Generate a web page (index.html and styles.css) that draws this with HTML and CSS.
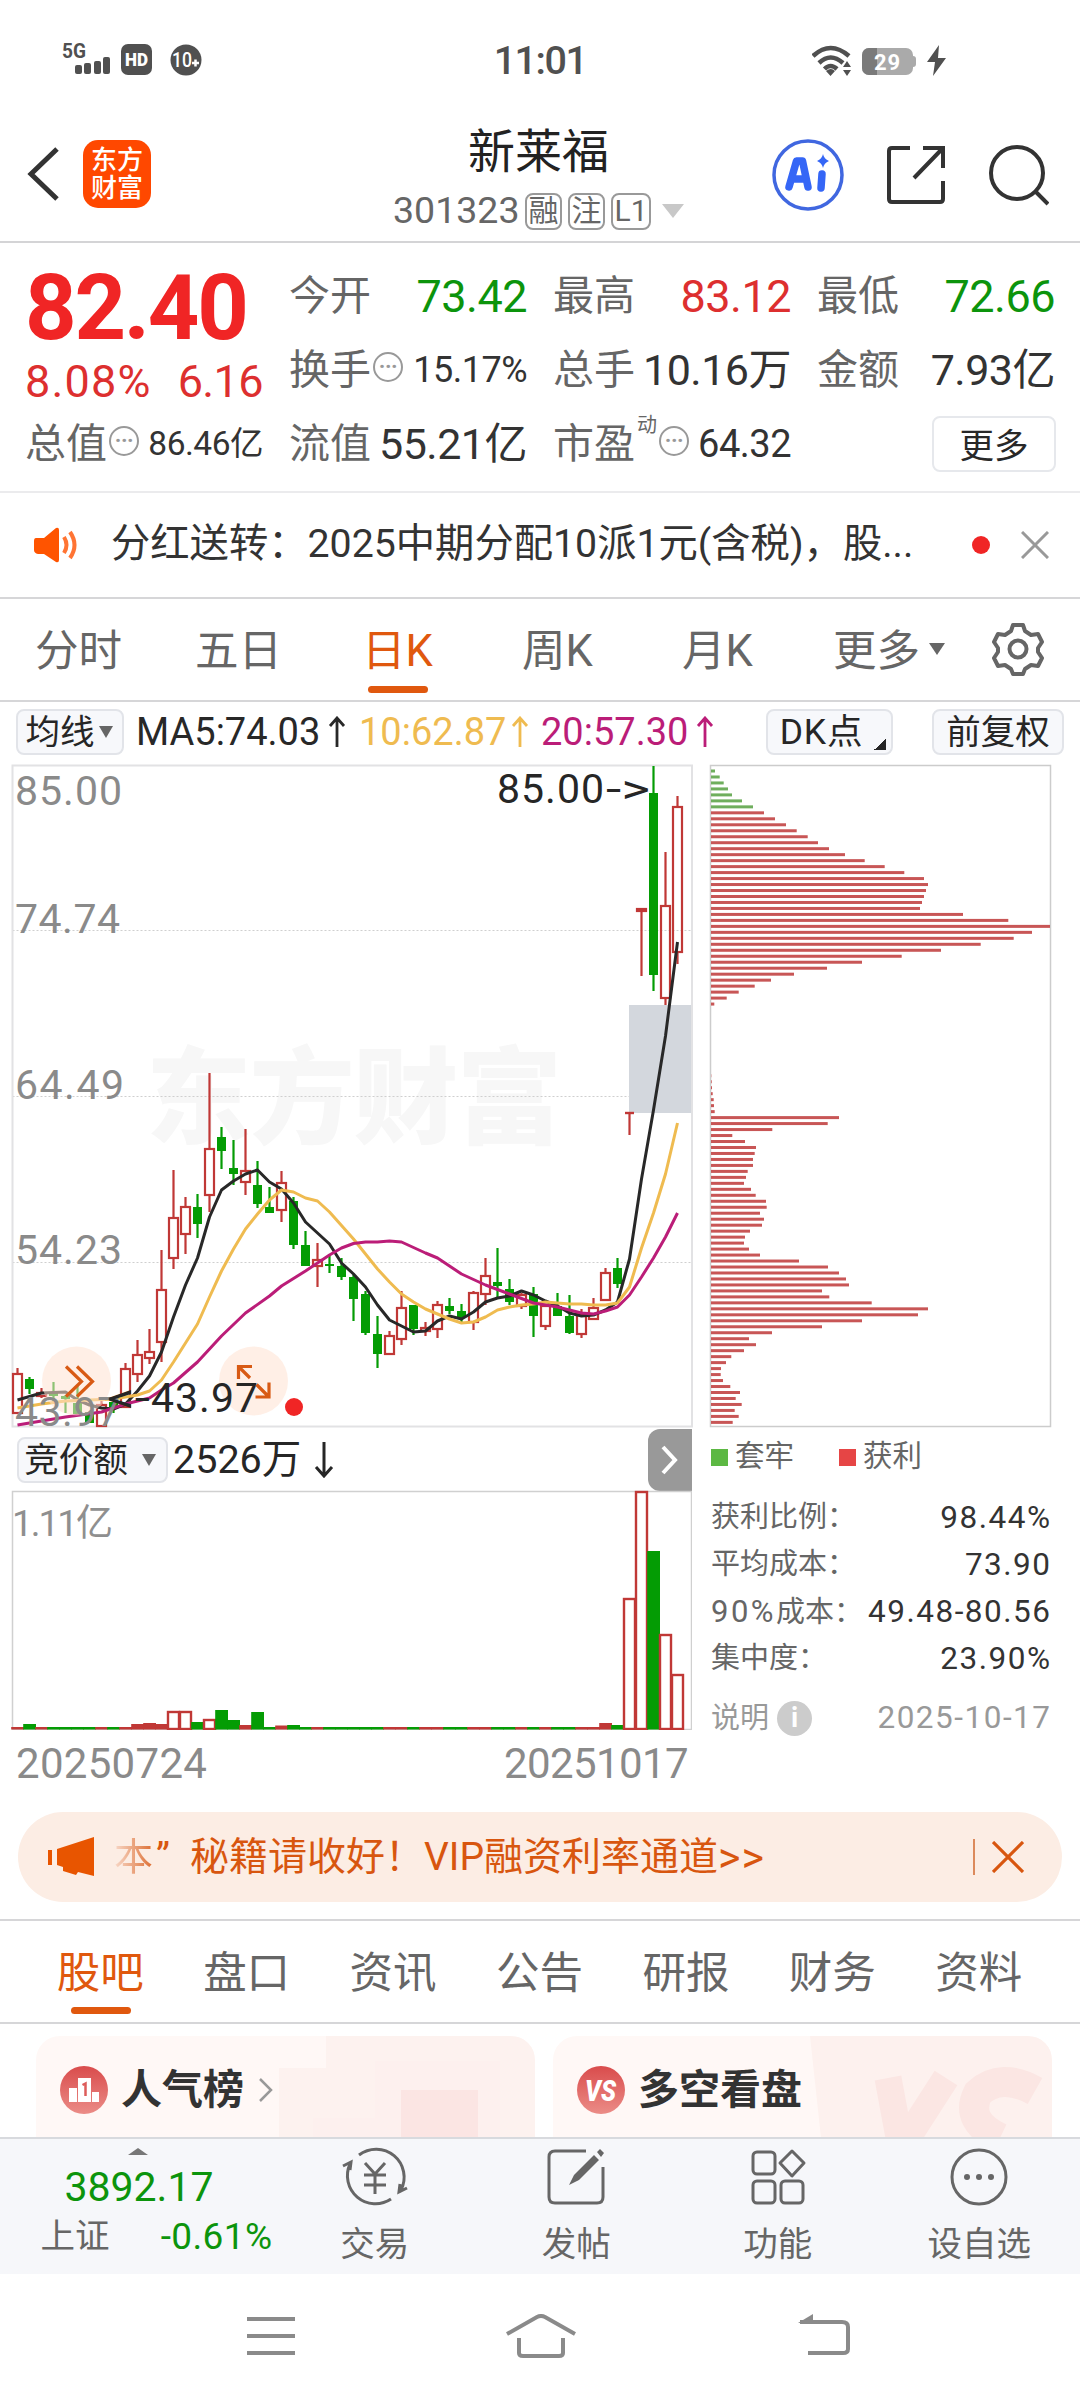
FILE: index.html
```html
<!DOCTYPE html>
<html lang="zh-CN">
<head>
<meta charset="utf-8">
<title>新莱福 301323</title>
<link rel="stylesheet" href="styles.css">
</head>
<body>
<div class="screen">
  <div class="status">
    <svg class="status-left" width="150" height="40" viewBox="0 0 150 40">
      <text x="0" y="17" font-size="21" font-weight="700" textLength="24" lengthAdjust="spacingAndGlyphs" fill="#505050">5G</text>
      <g fill="#505050">
        <rect x="13" y="24" width="7" height="9" rx="2"/><rect x="22" y="22" width="7" height="11" rx="2"/>
        <rect x="32" y="20" width="7" height="13" rx="2"/><rect x="41" y="16" width="7" height="17" rx="2"/>
        <rect x="59" y="3" width="31" height="31" rx="7"/><circle cx="124" cy="19" r="15.5"/>
      </g>
      <text x="63" y="25" font-size="19" font-weight="900" textLength="23" lengthAdjust="spacingAndGlyphs" fill="#fff">HD</text>
      <text x="110" y="26" font-size="20" font-weight="500" textLength="20" lengthAdjust="spacingAndGlyphs" fill="#fff">10</text>
      <path d="M130 22h7M133.500 18.500v7" stroke="#fff" stroke-width="2.500"/>
    </svg>
    <span class="clock">11:01</span>
    <svg class="status-right" width="136" height="34" viewBox="0 0 136 34">
      <g fill="none" stroke="#505050" stroke-width="4.500">
        <path d="M1 12Q18.500-4 37 12"/><path d="M7 19Q18.500 8 31 19"/><path d="M12.500 25Q18.500 19 25 25"/>
      </g>
      <path d="M14 27q5-4 9 0l-4.500 5zM31 23l4-6 4 6zM31 26h8l-4 6z" fill="#505050"/>
      <rect x="50" y="4" width="51" height="27" rx="7" fill="#aaa"/>
      <path d="M57 4h8v27h-8a7 7 0 0 1-7-7V11a7 7 0 0 1 7-7z" fill="#7a7a7a"/>
      <path d="M101 12q3 0 3 3v5q0 3-3 3z" fill="#aaa"/>
      <text x="62" y="25.500" font-size="22" font-weight="700" textLength="26" fill="#fff">29</text>
      <path d="M127 1l-12 17h8l-2 14 13-18h-8z" fill="#505050"/>
    </svg>
  </div>

  <header class="header">
    <div class="head-side">
      <svg width="36" height="60" viewBox="0 0 36 60"><path d="M32 5L6 30l26 25" fill="none" stroke="#333" stroke-width="5"/></svg>
      <div class="logo"><span>东方</span><span>财富</span></div>
    </div>
    <div class="head-mid">
      <h1>新莱福</h1>
      <div class="code"><span>301323</span><i>融</i><i>注</i><i class="lv">L1</i><b></b></div>
    </div>
    <div class="head-icons">
      <svg width="74" height="74" viewBox="0 0 74 74"><circle cx="37" cy="37" r="34" fill="none" stroke="#4067e0" stroke-width="3.500"/>
        <path d="M18 49l7.500-26h6l5.500 26M22 41h11M51 36l-1 14" fill="none" stroke="#3566f6" stroke-width="7.500" stroke-linejoin="round" stroke-linecap="round"/>
        <path d="M52 16q1 5 6 7-5 2-6 7-1-5-6-7 5-2 6-7z" fill="#3566f6"/></svg>
      <svg width="60" height="60" viewBox="0 0 60 60" fill="none" stroke="#333" stroke-width="4"><path d="M24 3H6q-3 0-3 3v48q0 3 3 3h48q3 0 3-3V36M37 3h20v20M57 3L28 33"/></svg>
      <svg width="60" height="62" viewBox="0 0 60 62" fill="none" stroke="#333" stroke-width="4"><circle cx="28" cy="29" r="26"/><path d="M46 47l13 13"/></svg>
    </div>
  </header>

  <section class="quote">
    <div class="price"><strong>82.40</strong><div class="chg"><span>8.08%</span><span>6.16</span></div></div>
    <div class="cell"><label>今开</label><span class="green">73.42</span></div>
    <div class="cell"><label>最高</label><span class="red">83.12</span></div>
    <div class="cell"><label>最低</label><span class="green">72.66</span></div>
    <div class="cell"><label>换手<em>···</em></label><span class="sm">15.17%</span></div>
    <div class="cell"><label>总手</label><span class="md">10.16万</span></div>
    <div class="cell"><label>金额</label><span class="md">7.93亿</span></div>
    <div class="cell"><label>总值<em>···</em></label><span class="xs">86.46亿</span></div>
    <div class="cell"><label>流值</label><span class="md">55.21亿</span></div>
    <div class="cell"><label>市盈<sup>动</sup><em>···</em></label><span class="sm pe">64.32</span></div>
    <div class="cell end"><button class="more">更多</button></div>
  </section>

  <section class="notice">
    <svg width="46" height="36" viewBox="0 0 46 36"><path d="M2 11h8L22 1q3-1 3 2v30q0 3-3 2L10 27H4q-4-1-4-4V14q0-3 2-3z" fill="#ff5400"/><path d="M30 10q5 8 0 16M36 5q9 13 0 26" fill="none" stroke="#ff7433" stroke-width="4"/></svg>
    <p>分红送转：2025中期分配10派1元(含税)，股...</p>
    <i></i>
    <svg width="28" height="28" viewBox="0 0 28 28"><path d="M1 1l26 26M27 1L1 27" stroke="#999" stroke-width="3"/></svg>
  </section>

  <nav class="periods">
    <span>分时</span><span>五日</span><span class="on">日K</span><span>周K</span><span>月K</span><span class="drop">更多<b></b></span>
    <svg width="54" height="54" viewBox="0 0 54 54" fill="none" stroke="#666" stroke-width="4"><path d="M22 3h10l2 6 6 4 7-1 4 8-4 6v4l4 6-4 8-7-1-6 4-2 5H22l-2-5-6-4-7 1-4-8 4-6v-4l-4-6 4-8 7 1 6-4z" stroke-linejoin="round"/><circle cx="27" cy="27" r="8.500"/></svg>
  </nav>

  <section class="tools">
    <button class="t-ma">均线<b></b></button>
    <span class="ma ma5">MA5:74.03</span><svg class="up" viewBox="0 0 18 32"><path d="M9 31V2M2 10l7-8 7 8" stroke="#282828"/></svg>
    <span class="ma ma10">10:62.87</span><svg class="up" viewBox="0 0 18 32"><path d="M9 31V2M2 10l7-8 7 8" stroke="#efbb50"/></svg>
    <span class="ma ma20">20:57.30</span><svg class="up" viewBox="0 0 18 32"><path d="M9 31V2M2 10l7-8 7 8" stroke="#bb1d78"/></svg>
    <button class="t-dk">DK点<b></b></button>
    <button class="t-fq">前复权</button>
  </section>

  <section class="charts">
    <div class="left">
      <svg id="kline" class="kline" width="692" height="668" viewBox="0 762 692 668">
        <g class="cjk" font-weight="900" fill="#f7f7f7"><text x="146" y="1135" font-size="105" textLength="416">东方财富</text></g>
        <path d="M12.500 930.500H692M12.500 1096.500H692M12.500 1262.500H692" stroke="#cfcfcf" stroke-width="1" stroke-dasharray="2 2"/>
        <rect x="629" y="1005" width="63" height="108" fill="#d3d7dd"/>
        <rect x="12.500" y="765.500" width="679.500" height="661" fill="none" stroke="#e2e2e4" stroke-width="2"/>
        <g id="candles"></g>
        <g id="averages" fill="none" stroke-width="3" stroke-linejoin="round"></g>
        <g fill="#ffe2d2" fill-opacity=".55"><circle cx="76.500" cy="1381" r="34.500"/><circle cx="253.500" cy="1381" r="34.500"/></g>
        <g fill="#8a8a8a" font-size="41">
          <text x="15" y="805" textLength="107">85.00</text><text x="15" y="933" textLength="105">74.74</text>
          <text x="15" y="1099" textLength="109">64.49</text><text x="15" y="1264" textLength="107">54.23</text>
          <text x="15" y="1426" textLength="105">43.97</text>
        </g>
        <g fill="#262626" font-size="41">
          <text x="497" y="803" textLength="107">85.00</text><text x="606" y="803" textLength="44" lengthAdjust="spacingAndGlyphs">-&gt;</text>
          <text x="107" y="1412" textLength="43" lengthAdjust="spacingAndGlyphs">&lt;-</text><text x="151" y="1412" textLength="107">43.97</text>
        </g>
        <g fill="none" stroke="#d85a14" stroke-width="3.200"><path d="M66 1366.500l15.500 15-15.500 15M77 1366.500l15.500 15-15.500 15M238.500 1379v-12.500h13.500M239 1367l11 11M269 1382.500v14.500h-13.500M268.500 1396.500l-12-12"/></g>
        <circle cx="294" cy="1407" r="9" fill="#f02525"/>
      </svg>
      <div class="sub">
        <button>竞价额<b></b></button><span>2526万</span><svg width="22" height="36" viewBox="0 0 22 36"><path d="M11 0v34M3 25l8 9 8-9" fill="none" stroke="#262626" stroke-width="3"/></svg>
        <button class="fold"><svg width="18" height="30" viewBox="0 0 18 30"><path d="M2 2l12 13L2 28" fill="none" stroke="#fff" stroke-width="4"/></svg></button>
      </div>
      <svg class="volume" width="692" height="240" viewBox="0 1490 692 240">
        <rect x="12.500" y="1491.500" width="679" height="238" fill="none" stroke="#d0d0d0" stroke-width="1.500"/>
        <g id="bars"></g>
        <text x="12" y="1536" font-size="37" fill="#8f8f8f" textLength="101">1.11亿</text>
      </svg>
      <div class="dates"><span>20250724</span><span>20251017</span></div>
    </div>
    <div class="right">
      <svg class="chips" width="343" height="664" viewBox="709 764 343 664">
        <rect x="710.500" y="765.500" width="340" height="661" fill="none" stroke="#ccc" stroke-width="1.500"/>
        <g id="chips"></g>
      </svg>
      <div class="legend"><i class="g"></i><span>套牢</span><i class="r"></i><span>获利</span></div>
      <dl>
        <div><dt>获利比例：</dt><dd>98.44%</dd></div>
        <div><dt>平均成本：</dt><dd>73.90</dd></div>
        <div><dt><span>90%</span>成本：</dt><dd>49.48-80.56</dd></div>
        <div><dt>集中度：</dt><dd>23.90%</dd></div>
        <div class="note"><dt>说明<i>i</i></dt><dd>2025-10-17</dd></div>
      </dl>
    </div>
  </section>

  <aside class="banner">
    <svg width="46" height="40" viewBox="0 0 46 40" fill="#e85500"><path d="M0 13h4v15H0zM9 12L46 0v39L30 35l-2 3-13-4v-4l-6-2z"/></svg>
    <p><span class="fade">本</span><span class="q">”</span><span>秘籍请收好！</span><span>VIP融资利率通道</span><span class="gt">&gt;&gt;</span></p>
    <i></i>
    <svg width="32" height="32" viewBox="0 0 32 32"><path d="M1 1l30 30M31 1L1 31" stroke="#d8560f" stroke-width="3.200"/></svg>
  </aside>

  <nav class="sections"><span class="on">股吧</span><span>盘口</span><span>资讯</span><span>公告</span><span>研报</span><span>财务</span><span>资料</span></nav>

  <section class="cards">
    <article>
      <svg class="deco" width="499" height="102" viewBox="0 0 499 102"><path d="M243 32h47V0h185q24 0 24 24v78H243z" fill="#fdf2ef"/><path d="M277 82h62V25h125v77H277z" fill="#fdf0ee"/><path d="M365 54h77v48h-77z" fill="#fbe5e3"/></svg>
      <svg class="badge" width="48" height="48" viewBox="0 0 48 48"><defs><linearGradient id="bg" x2="0" y2="1"><stop stop-color="#d94c4c"/><stop offset="1" stop-color="#eb8c87"/></linearGradient></defs><circle cx="24" cy="24" r="24" fill="url(#bg)"/><path d="M9 22h8v14H9zM18 12h13v24H18zM32 26h7v10h-7z" fill="#fff"/><path d="M22.500 19l3-1.500V30" fill="none" stroke="#dd5c5a" stroke-width="2.500"/></svg>
      <h2>人气榜</h2>
      <svg width="14" height="24" viewBox="0 0 14 24"><path d="M1 1l11 11L1 23" fill="none" stroke="#999" stroke-width="2.500"/></svg>
    </article>
    <article>
      <svg class="deco" width="499" height="102" viewBox="0 0 499 102"><path d="M257 0h218q24 0 24 24v78H268z" fill="#fdf1ee"/><g fill="none" stroke="#fbe6e3"><path d="M335 42l13 70 45-70" stroke-width="27"/><path d="M482 55q-34-19-57 2-14 28 22 45" stroke-width="30"/></g></svg>
      <svg class="badge" width="48" height="48" viewBox="0 0 48 48"><circle cx="24" cy="24" r="24" fill="url(#bg)"/><text x="8" y="35" font-size="30" font-weight="900" font-style="italic" textLength="31" lengthAdjust="spacingAndGlyphs" fill="#fff">VS</text></svg>
      <h2>多空看盘</h2>
    </article>
  </section>

  <footer class="bottom">
    <div class="index"><b></b><strong>3892.17</strong><div><span>上证</span><em>-0.61%</em></div></div>
    <div class="act"><svg viewBox="0 0 66 60"><path d="M17 8A28 28 0 0 1 59 43M49 52A28 28 0 0 1 8 17M1 19l8-4-1 8M65 41l-8 4 1-8"/><path d="M23 16l10 11 10-11M22 28h22M22 38h22M33 27v20"/></svg><span>交易</span></div>
    <div class="act"><svg viewBox="0 0 66 60"><path d="M43 4H12q-6 0-6 6v40q0 6 6 6h42q6 0 6-6V20"/><path d="M26 38l5-10L51 8l5 5-20 20zM54 5l3-3 4 4-3 4z" fill="#666" stroke="none"/></svg><span>发帖</span></div>
    <div class="act"><svg viewBox="0 0 66 60"><rect x="8" y="5" width="22" height="22" rx="4"/><rect x="8" y="34" width="22" height="22" rx="4"/><rect x="36" y="34" width="22" height="22" rx="4"/><path d="M47 4l12 12-12 13-12-13z" stroke-linejoin="round"/></svg><span>功能</span></div>
    <div class="act"><svg viewBox="0 0 66 60"><circle cx="33" cy="30" r="27"/><g fill="#666" stroke="none"><circle cx="21" cy="30" r="3"/><circle cx="33" cy="30" r="3"/><circle cx="45" cy="30" r="3"/></g></svg><span>设自选</span></div>
  </footer>

  <div class="sysnav">
    <svg width="52" height="46" viewBox="0 0 52 46"><path d="M2 5h48M2 22h48M2 39h48"/></svg>
    <svg width="72" height="46" viewBox="0 0 72 46"><path d="M2 20L32 3q4-2 8 0l30 17M14 24v15q0 3 4 3h36q4 0 4-3V24"/></svg>
    <svg width="52" height="46" viewBox="0 0 52 46"><path d="M2 8h42q6 0 6 5v22q0 4-5 4H10"/><path d="M0 9L15 0v9z" fill="#8a8a8a" stroke="none"/></svg>
  </div>
</div>
<script src="charts.js"></script>
</body>
</html>
```
FILE: styles.css
```css
* { box-sizing: border-box; }
body { margin: 0; background: #fff; }
body, button, text { font-family: Roboto, "Noto Sans CJK SC", sans-serif; }
.cjk text { font-family: "Noto Sans CJK SC", sans-serif; }
h1, h2, p, dl, dd { margin: 0; }
i, em { font-style: normal; }
svg { display: block; flex: none; }
.screen { width: 1080px; height: 2400px; overflow: hidden; display: flex; flex-direction: column; line-height: 1; color: #333; white-space: nowrap; }
.screen > * { flex: none; }

.status { height: 107px; padding: 15px 132px 0; display: grid; grid-template-columns: 1fr auto 1fr; align-items: center; }
.status-left { margin-left: -70px; }
.status-right { justify-self: end; }
.clock { font-size: 39.500px; font-weight: 500; color: #505050; letter-spacing: -1.500px; }

.header { height: 136px; border-bottom: 2px solid #d4d4d6; display: grid; grid-template-columns: 393px 1fr 309px; }
.head-side { display: flex; align-items: center; gap: 22px; padding-left: 25px; }
.logo { width: 68px; height: 68px; border-radius: 15px; background: #ff4800; color: #fff; font-size: 26px; font-weight: 500; line-height: 28px; display: flex; flex-direction: column; align-items: center; justify-content: center; }
.head-mid { display: flex; flex-direction: column; padding-top: 20px; }
.head-mid h1 { font-size: 47px; font-weight: 400; line-height: 50px; color: #222; margin-left: 75px; }
.code { display: flex; align-items: center; height: 38px; margin-top: 15px; font-size: 37.500px; color: #666; }
.code span { width: 132px; }
.code i { width: 37px; height: 37px; margin-right: 6px; border: 2px solid #999; border-radius: 8px; font-size: 30px; line-height: 32px; text-align: center; color: #666; }
.code i.lv { width: 40px; margin-right: 11px; }
.code b { border: 11px solid transparent; border-top: 14px solid #c8c8c8; border-bottom: 0; }
.head-icons { display: flex; align-items: center; gap: 41px; padding-top: 2px; }
.head-icons svg:nth-child(3) { margin-left: 2px; }

.quote { height: 250px; padding: 16px 26px 0 25px; display: grid; grid-template-columns: repeat(4, 238px); column-gap: 26px; grid-auto-rows: 74px; border-bottom: 2px solid #ebebed; }
.price { grid-row: span 2; color: #f02525; }
.price strong { display: block; font-size: 90px; font-weight: 700; line-height: 74px; letter-spacing: -2.200px; padding-top: 13px; height: 86px; }
.chg { display: flex; justify-content: space-between; font-size: 45px; line-height: 74px; color: #dd2f2f; letter-spacing: -.600px; }
.chg span:first-child { letter-spacing: 1.200px; }
.cell { display: flex; align-items: center; justify-content: space-between; font-size: 45px; }
.cell span { letter-spacing: -.500px; }
.cell.end { justify-content: flex-end; }
.cell label { font-size: 41px; color: #666; display: flex; align-items: center; flex: none; }
.cell em { flex: none; width: 30px; height: 30px; margin: -6px 0 0 2px; border: 2px solid #999; border-radius: 50%; font-size: 22px; font-weight: 700; line-height: 26px; text-align: center; letter-spacing: -.500px; color: #999; }
.cell sup { font-size: 20px; line-height: 20px; width: 20px; margin: -38px 0 0 2px; }
.cell sup + em { margin-left: 2px; }
.cell .md { font-size: 43px; }
.cell .sm { font-size: 36px; }
.cell .xs { font-size: 33.500px; }
.cell .pe { font-size: 38px; }
.green { color: #0c940c; }
.red { color: #dd2f2f; }
.more { width: 124px; height: 56px; margin-right: -1px; padding: 0 0 4px; border: 2px solid #e6e8ec; border-radius: 8px; background: #fff; font-size: 34.500px; color: #282828; }

.notice { height: 106px; padding: 0 31px 0 34px; display: flex; align-items: center; border-bottom: 2px solid #d6d6d8; }
.notice p { flex: 1; margin-left: 31px; font-size: 39.300px; }
.notice i { width: 18px; height: 18px; border-radius: 50%; background: #f02525; margin-right: 31px; }

.periods { height: 103px; border-bottom: 2px solid #d6d6d8; padding: 4px 35px 0; display: flex; align-items: center; font-size: 43.500px; color: #666; }
.periods span { width: 160px; }
.periods span:nth-child(2) { width: 167px; }
.periods span:nth-child(5) { width: 151px; }
.periods .drop { width: 158px; display: flex; align-items: center; gap: 9px; }
.periods .drop b { margin-top: -5px; border: 8px solid transparent; border-top: 12px solid #666; border-bottom: 0; }
.periods svg { margin-top: -5px; }
.on { color: #e0580e; position: relative; }
.on::after { content: ""; position: absolute; left: 6px; bottom: -20px; width: 60px; height: 7px; border-radius: 4px; background: #e0580e; }

.tools { height: 60px; padding: 0 16px; display: flex; align-items: center; color: #282828; }
.tools button, .sub button { height: 46px; padding: 0; border: 2px solid #e2e4e9; border-radius: 8px; background: #f7f8fb; font-size: 34.500px; line-height: 40px; color: #262626; display: flex; align-items: center; justify-content: center; }
.tools b, .sub b { border: 7.500px solid transparent; border-top: 12px solid #666; border-bottom: 0; }
.tools .t-ma { width: 108px; gap: 4px; padding-right: 2px; }
.ma { font-size: 38px; }
.ma5 { width: 192px; margin-left: 12px; }
.ma10 { width: 152px; margin-left: 13px; color: #efbb50; }
.ma20 { width: 155px; margin-left: 12px; color: #bb1d78; }
.up { width: 18px; height: 32px; fill: none; stroke-width: 2.800px; }
.tools .t-dk { width: 127px; margin-left: auto; position: relative; padding-right: 16px; font-size: 35.500px; letter-spacing: .800px; }
.tools .t-dk b { position: absolute; right: 5px; bottom: 3px; border: 0; width: 12px; height: 12px; background: linear-gradient(135deg, transparent 50%, #262626 50%); }
.tools .t-fq { width: 132px; margin-left: 39px; }

.charts { display: grid; grid-template-columns: 692px 388px; height: 1043px; }
.kline { overflow: visible; }
.left, .right { display: flex; flex-direction: column; }
.sub { height: 60px; padding-left: 17px; display: flex; align-items: center; font-size: 39.500px; color: #262626; }
.sub button { width: 151px; gap: 14px; margin-right: 5px; padding-right: 5px; }
.sub span { margin-right: 12px; }
.sub .fold { width: 44px; height: 62px; margin: 0 0 0 auto; padding: 0; border: 0; border-radius: 12px 0 0 12px; background: #999; }
.dates { display: flex; justify-content: space-between; padding: 13px 4px 0 16px; font-size: 42px; color: #8a8a8a; letter-spacing: .300px; }
.dates span + span { letter-spacing: -.600px; }
.right { padding: 2px 30px 0 17px; }
.legend { height: 58px; display: flex; align-items: center; font-size: 29.500px; color: #666; padding-left: 2px; }
.legend i { width: 17px; height: 17px; margin-right: 7px; }
.legend .g { background: #5cb843; }
.legend .r { background: #e64545; margin-left: 45px; }
.right dl { padding: 8px 0 0 2px; }
.right dl div { height: 47px; display: flex; align-items: center; justify-content: space-between; font-size: 29px; color: #666; }
.right dt span { font-size: 31px; letter-spacing: 2.500px; }
.right dd { font-size: 31.500px; color: #333; letter-spacing: 1.500px; margin-right: -1.500px; }
.right dl .note { margin-top: 12px; height: 48px; color: #999; }
.note dt { display: flex; align-items: center; gap: 8px; }
.right .note dd { color: #999; }
.note i { width: 35px; height: 35px; border-radius: 50%; background: #ccc; color: #fff; font-size: 27px; font-weight: 700; line-height: 35px; text-align: center; }

.banner { height: 90px; margin: 7px 18px 17px; padding: 0 38px 0 30px; border-radius: 45px; background: #fcede4; color: #d8560f; display: flex; align-items: center; }
.banner p { flex: 1; display: flex; margin-left: 20px; font-size: 39px; }
.fade { background: linear-gradient(90deg, #f8d9c9, #dd6f33); -webkit-background-clip: text; color: transparent; }
.banner .q { width: 37px; padding-left: 3px; }
.banner .gt { font-size: 43px; line-height: 39px; letter-spacing: 1px; }
.banner i { width: 2px; height: 36px; background: #dc8a5c; margin-right: 17px; }

.sections { height: 105px; border-top: 2px solid #d6d6d8; border-bottom: 2px solid #d6d6d8; padding: 4px 28px 0 27px; display: grid; grid-template-columns: repeat(7, 1fr); align-items: center; text-align: center; font-size: 43.500px; color: #666; }
.sections .on::after { left: 44px; bottom: -19px; }

.cards { height: 113px; padding: 12px 28px 0 36px; display: flex; gap: 18px; overflow: hidden; }
.cards article { width: 499px; height: 120px; border-radius: 24px 24px 0 0; background: #fff8f6; display: flex; align-items: center; padding: 0 0 12px 24px; position: relative; overflow: hidden; }
.deco { position: absolute; left: 0; top: 0; }
.badge { position: relative; }
.cards h2 { font-size: 41px; font-weight: 700; margin: 0 15px 0 13px; position: relative; }

.bottom { height: 137px; background: #f6f7fa; border-top: 2px solid #d8dade; display: grid; grid-template-columns: 274px repeat(4, 201.500px); color: #666; }
.index { display: flex; flex-direction: column; align-items: center; padding-top: 9px; }
.index b { margin-left: 2px; border: 10px solid transparent; border-bottom: 7px solid #777; border-top: 0; }
.index strong { font-size: 41px; font-weight: 400; color: #0c940c; margin: 12px 0 10px 4px; }
.index div { width: 232px; margin-left: 39px; display: flex; justify-content: space-between; align-items: center; font-size: 34.500px; }
.index em { font-size: 37px; color: #0c940c; letter-spacing: .400px; }
.act { display: flex; flex-direction: column; align-items: center; padding-top: 8px; font-size: 34.500px; gap: 20px; }
.act svg { width: 66px; height: 60px; fill: none; stroke: #666; stroke-width: 3px; }

.sysnav { height: 127px; padding-left: 245px; display: flex; align-items: flex-start; padding-top: 40px; }
.sysnav svg { fill: none; stroke: #8a8a8a; stroke-width: 4px; }
.sysnav svg:nth-child(2) { margin-left: 208px; }
.sysnav svg:nth-child(3) { margin-left: 221px; }
```
FILE: charts.js
```js
const RED = '#c03836';
const GREEN = '#049c04';
const PITCH = 12;
const FIRST = 17.5;
const cx = i => FIRST + PITCH * i;

// colour, high, body top, body bottom, low
const candles = [
  'r 1368 1374 1413 1413', 'g 1377 1379 1389 1394', 'r 1388 1393 1396 1398', 'g 1382 1393 1396 1402',
  'g 1395 1396 1399 1413', 'g 1386 1403 1414 1414', 'g 1412 1412 1423 1423', 'r 1401 1405 1426 1426',
  'g 1402 1402 1407 1413', 'r 1363 1369 1407 1407', 'r 1340 1355 1374 1382', 'r 1329 1352 1358 1364',
  'r 1250 1290 1342 1362', 'r 1170 1218 1258 1269', 'r 1197 1207 1234 1254', 'g 1194 1207 1224 1238',
  'r 1073 1149 1195 1212', 'g 1127 1137 1151 1169', 'g 1140 1168 1174 1185', 'r 1129 1171 1182 1195',
  'g 1161 1185 1204 1208', 'g 1187 1207 1213 1213', 'r 1171 1183 1210 1222', 'g 1197 1201 1245 1249',
  'g 1231 1245 1266 1266', 'r 1243 1260 1266 1287', 'g 1254 1264 1266 1273', 'g 1258 1266 1277 1280',
  'g 1275 1277 1299 1321', 'g 1291 1294 1333 1335', 'g 1316 1334 1354 1368', 'r 1331 1336 1354 1354',
  'r 1291 1308 1339 1345', 'g 1305 1305 1329 1335', 'r 1322 1328 1331 1336', 'r 1301 1305 1329 1338',
  'g 1298 1306 1311 1314', 'g 1304 1311 1318 1323', 'r 1291 1293 1322 1330', 'r 1258 1276 1294 1305',
  'g 1248 1282 1286 1298', 'g 1279 1289 1302 1305', 'r 1293 1295 1306 1309', 'g 1287 1294 1316 1337',
  'r 1306 1306 1326 1330', 'g 1293 1306 1316 1316', 'g 1295 1316 1333 1334', 'r 1309 1314 1334 1338',
  'r 1298 1308 1319 1319', 'r 1268 1273 1300 1300', 'g 1258 1268 1284 1288', 'r 1113 1113 1113 1135',
  'r 908 909 911 976', 'g 766 793 975 991', 'r 852 906 998 1005', 'r 796 807 952 964'
];

document.getElementById('candles').innerHTML = candles.map((row, i) => {
  const [kind, ...v] = row.split(' ');
  const [hi, top, bottom, lo] = v.map(Number);
  const x = cx(i);
  if (kind === 'g') {
    return `<path d="M${x} ${hi}V${lo}" stroke="${GREEN}" stroke-width="2.2"/>` +
      `<rect x="${x - 4.5}" y="${top}" width="9" height="${bottom - top}" fill="${GREEN}"/>`;
  }
  const body = bottom > top
    ? `<rect x="${x - 4.5}" y="${top}" width="9" height="${bottom - top}" fill="none" stroke="${RED}" stroke-width="2.2"/>`
    : `<path d="M${x - 4.5} ${top}h9" stroke="${RED}" stroke-width="2.4"/>`;
  return `<path d="M${x} ${hi}V${top}M${x} ${bottom}V${lo}" stroke="${RED}" stroke-width="2.2"/>` + body;
}).join('');

// candle index : y
const averages = {
  '#282828': '0:1400 2:1393 4:1392 5:1400 6:1405 7:1408 8:1409 9:1404 10:1391 11:1376 12:1352 13:1317 14:1285 15:1258 16:1217 17:1190 18:1181 19:1174 20:1170 21:1182 22:1189 23:1203 24:1222 25:1233 26:1244 27:1263 28:1274 29:1287 30:1305 31:1320 32:1326 33:1332 34:1331 35:1321 36:1316 37:1319 38:1312 39:1302 40:1298 41:1296 42:1291 43:1295 44:1301 45:1306 46:1313 47:1316 48:1315 49:1310 50:1302 51:1259 52:1179 53:1110 54:1036 55:942',
  '#efbb50': '0:1408 2:1404 4:1401 6:1400 8:1399 10:1395 11:1391 12:1380 13:1362 14:1343 15:1324 16:1297 17:1271 18:1249 19:1229 20:1214 21:1200 22:1190 23:1192 24:1198 25:1201 26:1212 28:1239 29:1254 30:1269 31:1282 32:1294 33:1302 34:1309 35:1314 36:1319 37:1323 38:1322 39:1317 40:1310 41:1307 42:1305 43:1304 44:1302 45:1303 46:1304 47:1304 48:1305 49:1305 50:1303 51:1287 52:1248 53:1213 54:1174 55:1123',
  '#bb1d78': '0:1425 4:1417 7:1412 9:1404 11:1398 12:1390 13:1383 15:1362 17:1336 19:1313 21:1296 22:1286 24:1271 26:1255 27:1248 28:1243.5 29:1242 30:1242 31:1241 32:1242 34:1253 35:1258 37:1274 39:1285 41:1294 43:1303 45:1307 47:1313 48:1314 49:1311 50:1307 51:1295 52:1277 53:1258 54:1237 55:1213'
};
document.getElementById('averages').innerHTML = Object.entries(averages).map(([color, row]) => {
  const points = row.split(' ').map(p => { const [i, y] = p.split(':'); return cx(+i) + ',' + y; }).join(' ');
  return `<polyline points="${points}" stroke="${color}"/>`;
}).join('');

// bar tops of the auction turnover; days not listed stay on the base line
const tops = { 1: 1724, 10: 1724, 11: 1723, 12: 1724, 13: 1711, 14: 1711, 15: 1722, 16: 1719, 17: 1710, 18: 1720, 19: 1725, 20: 1712, 22: 1725.5, 23: 1725, 49: 1723, 50: 1725, 51: 1598, 52: 1491, 53: 1551, 54: 1634, 55: 1674 };
document.getElementById('bars').innerHTML = candles.map((row, i) => {
  const color = row[0] === 'g' ? GREEN : RED;
  const top = tops[i] || 1727;
  const x = cx(i);
  return row[0] === 'g' || top >= 1723
    ? `<rect x="${x - 6.3}" y="${top}" width="12.8" height="${1729.5 - top}" fill="${color}"/>`
    : `<rect x="${x - 5.5}" y="${top + 1}" width="11" height="${1728 - top}" fill="#fff" stroke="${color}" stroke-width="2.4"/>`;
}).join('');

// cost distribution, bar length in thirds of a pixel, top price first
const chips = [12,26,38,51,63,93,126,159,192,225,257,290,321,354,402,461,521,580,639,651,645,639,633,627,756,892,1017,963,908,809,690,572,453,348,249,180,131,83,47,10,0,0,0,0,0,0,0,0,0,0,0,1,2,3,5,8,9,11,384,350,184,64,102,135,131,126,126,110,105,99,120,134,165,167,147,159,153,117,102,99,114,147,264,351,384,405,414,333,355,482,651,621,453,333,183,114,135,99,61,45,30,29,36,58,87,74,92,71,83,65];
document.getElementById('chips').innerHTML = chips.map((n, k) =>
  `<rect x="711" y="${(769.5 + 5.976 * k).toFixed(2)}" width="${(n / 3).toFixed(1)}" height="3" fill="${k < 7 ? '#6fae5d' : '#c85656'}"/>`
).join('');
```
